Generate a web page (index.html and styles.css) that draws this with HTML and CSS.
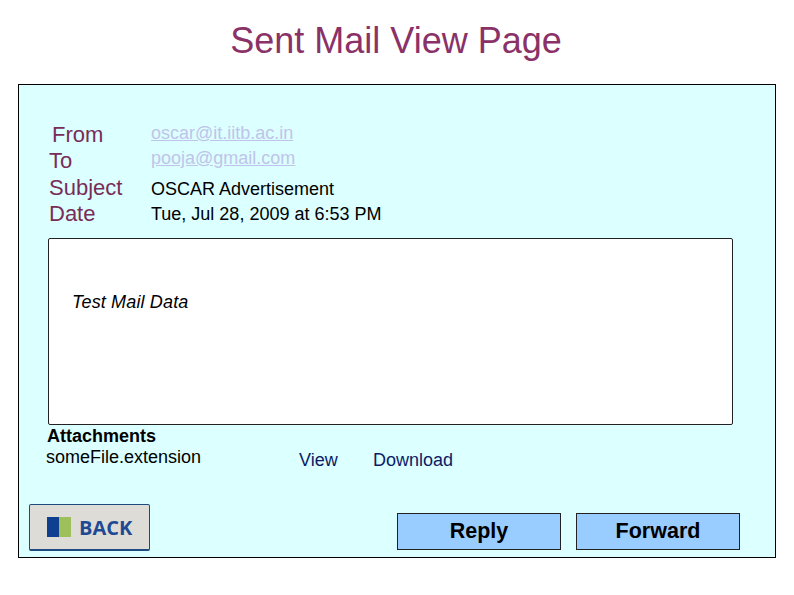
FILE: index.html
```html
<!DOCTYPE html>
<html lang="en">
  <head>
    <meta charset="UTF-8" />
    <title>Sent Mail View Page</title>
    <link rel="stylesheet" href="styles.css">
  </head>
  <body>
    <h1 class="page-title">Sent Mail View Page</h1>

    <main class="panel">
      <section class="meta">
        <div class="meta-labels">
          <span class="label-from">From</span>
          <span class="label-to">To</span>
          <span>Subject</span>
          <span>Date</span>
        </div>
        <div class="meta-values">
          <a class="addr" href="#">oscar@it.iitb.ac.in</a>
          <a class="addr" href="#">pooja@gmail.com</a>
          <span class="value-subject">OSCAR Advertisement</span>
          <span class="value-date">Tue, Jul 28, 2009 at 6:53 PM</span>
        </div>
      </section>

      <section class="message">Test Mail Data</section>

      <section class="attachments">
        <div class="file">
          <strong>Attachments</strong>
          <span class="file-name">someFile.extension</span>
        </div>
        <a class="file-link link-view" href="#">View</a>
        <a class="file-link" href="#">Download</a>
      </section>

      <footer class="actions">
        <a class="back" href="#">
          <svg class="back-icon" width="24" height="20" viewBox="0 0 24 20">
            <rect width="12" height="20" fill="#0f3f8f" />
            <rect x="12" width="12" height="20" fill="#9dc05a" />
          </svg>
          <span>BACK</span>
        </a>
        <button class="btn btn-reply">Reply</button>
        <button class="btn">Forward</button>
      </footer>
    </main>
  </body>
</html>
```

FILE: styles.css
```css
* {
  box-sizing: border-box;
}

html {
  font-family: "Liberation Sans", Arial, sans-serif;
  font-size: 18px;
}

body {
  margin: 0;
  background: white;
}

.page-title {
  height: 84px;
  margin: 0;
  padding: 20px 2px 0 0;
  color: #8a3268;
  font-size: 36px;
  font-weight: normal;
  line-height: 42px;
  text-align: center;
}

.panel {
  width: 758px;
  height: 474px;
  margin-left: 18px;
  padding: 36px 0 0 28px;
  background: #dcffff;
  border: 1px solid black;
}

.meta {
  display: flex;
  height: 117px;
}

.meta-labels {
  display: flex;
  flex-direction: column;
  width: 104px;
  padding-top: 1px;
  color: #7a2c58;
  font-size: 22px;
  line-height: 26.4px;
}

.label-from {
  margin-left: 5px;
}

.meta-labels span:nth-child(n + 2) {
  margin-left: 2px;
}

.meta-values {
  display: flex;
  flex-direction: column;
  line-height: 25px;
  color: black;
}

.addr {
  color: #c0c4ea;
}

.value-subject {
  margin-top: 6px;
}

.message {
  width: 685px;
  height: 187px;
  margin-left: 1px;
  padding: 53px 0 0 23px;
  background: white;
  border: 1px solid #222;
  border-radius: 2px;
  font-style: italic;
  letter-spacing: 0.15px;
  line-height: 20px;
}

.attachments {
  display: flex;
  height: 79px;
}

.file {
  display: flex;
  flex-direction: column;
  width: 252px;
  padding-top: 1px;
  line-height: 21px;
}

.file-name {
  margin-left: -1px;
}

.file-link {
  margin-top: 25px;
  color: #0b1a66;
  line-height: 20px;
  text-decoration: none;
}

.link-view {
  width: 74px;
}

.actions {
  display: flex;
  align-items: flex-start;
}

.back {
  display: flex;
  align-items: center;
  gap: 8px;
  width: 121px;
  height: 47px;
  margin-left: -18px;
  padding-left: 17px;
  background: #dedcd6;
  border: 1px solid #1f4a80;
  border-bottom-width: 2px;
  border-radius: 2px;
  color: #1f4a93;
  font-family: "Open Sans", sans-serif;
  font-size: 20px;
  font-weight: 700;
  text-decoration: none;
}

.btn {
  width: 164px;
  height: 37px;
  margin-top: 9px;
  padding: 0;
  background: #99ccff;
  border: 1px solid #222;
  color: black;
  font-family: inherit;
  font-size: 21.5px;
  font-weight: bold;
}

.btn-reply {
  margin-left: 247px;
  margin-right: 15px;
}
```
